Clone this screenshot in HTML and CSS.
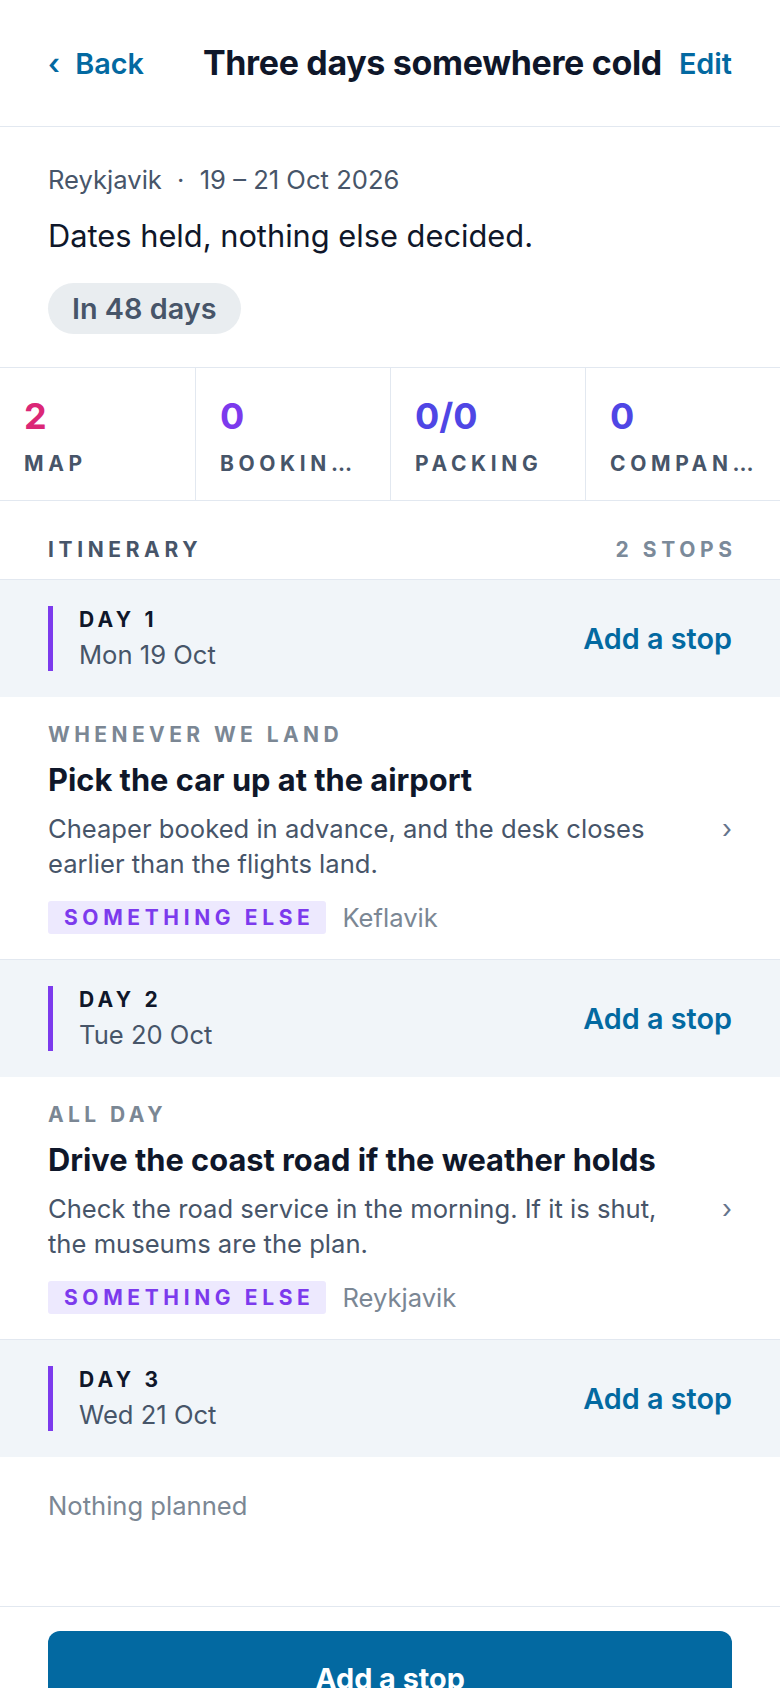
FILE: index.html
```html
<!DOCTYPE html>
<html lang="en">
  <head>
    <meta charset="utf-8" />
    <title>Three days somewhere cold</title>
    <link rel="stylesheet" href="styles.css">
  </head>
  <body>
    <header class="topbar">
      <a class="back" href="#"><span class="back-chev">&lsaquo;</span> Back</a>
      <h1 class="title">Three days somewhere cold</h1>
      <a class="edit" href="#">Edit</a>
    </header>

    <section class="summary">
      <p class="meta">Reykjavik <span class="dot">&middot;</span> 19 &ndash; 21 Oct 2026</p>
      <p class="note">Dates held, nothing else decided.</p>
      <span class="pill">In 48 days</span>
    </section>

    <nav class="stats">
      <a class="stat" href="#"><span class="num num-map">2</span><span class="label">Map</span></a>
      <a class="stat" href="#"><span class="num num-book">0</span><span class="label">Bookings</span></a>
      <a class="stat" href="#"><span class="num num-pack">0/0</span><span class="label">Packing</span></a>
      <a class="stat" href="#"><span class="num num-comp">0</span><span class="label">Companions</span></a>
    </nav>

    <div class="section-head">
      <span>Itinerary</span>
      <span class="count">2 stops</span>
    </div>

    <div class="day">
      <div class="day-info">
        <span class="day-num">Day 1</span>
        <span class="day-date">Mon 19 Oct</span>
      </div>
      <a class="add" href="#">Add a stop</a>
    </div>
    <a class="stop" href="#">
      <div class="stop-body">
        <p class="when">Whenever we land</p>
        <h2 class="stop-title">Pick the car up at the airport</h2>
        <p class="desc">Cheaper booked in advance, and the desk closes earlier than the flights land.</p>
        <div class="tags">
          <span class="tag">Something else</span>
          <span class="place">Keflavik</span>
        </div>
      </div>
      <span class="chevron">&rsaquo;</span>
    </a>

    <div class="day">
      <div class="day-info">
        <span class="day-num">Day 2</span>
        <span class="day-date">Tue 20 Oct</span>
      </div>
      <a class="add" href="#">Add a stop</a>
    </div>
    <a class="stop" href="#">
      <div class="stop-body">
        <p class="when">All day</p>
        <h2 class="stop-title">Drive the coast road if the weather holds</h2>
        <p class="desc">Check the road service in the morning. If it is shut, the museums are the plan.</p>
        <div class="tags">
          <span class="tag">Something else</span>
          <span class="place">Reykjavik</span>
        </div>
      </div>
      <span class="chevron">&rsaquo;</span>
    </a>

    <div class="day">
      <div class="day-info">
        <span class="day-num">Day 3</span>
        <span class="day-date">Wed 21 Oct</span>
      </div>
      <a class="add" href="#">Add a stop</a>
    </div>
    <div class="empty">Nothing planned</div>

    <footer class="actions">
      <button class="primary" type="button">Add a stop</button>
    </footer>
  </body>
</html>
```

FILE: styles.css
```css
body {
  margin: 0;
  background-color: #ffffff;
  color: #0f172a;
  font-family: Inter, "Noto Sans", sans-serif;
}
a {
  color: inherit;
  text-decoration: none;
}
p, h1, h2 {
  margin: 0;
}

.topbar {
  display: flex;
  align-items: center;
  gap: 17px;
  height: 126px;
  padding: 0 48px;
  border-bottom: 1px solid #e2e8f0;
}
.back {
  margin-right: auto;
  color: #0369a1;
  font-size: 28.8px;
  font-weight: 600;
}
.back-chev {
  display: inline-block;
  margin-right: 8px;
}
.title {
  font-size: 34px;
  line-height: 40px;
  font-weight: 700;
  letter-spacing: -0.01em;
  color: #0f172a;
}
.edit {
  color: #0369a1;
  font-size: 28.8px;
  font-weight: 600;
}

.summary {
  padding: 37px 48px 33px;
  border-bottom: 1px solid #e2e8f0;
}
.meta {
  font-size: 25.6px;
  line-height: 32px;
  color: #475569;
}
.dot {
  margin: 0 8px;
}
.note {
  margin-top: 22px;
  font-size: 30.8px;
  line-height: 36px;
  color: #0f172a;
}
.pill {
  display: block;
  width: fit-content;
  margin-top: 29px;
  padding: 0 24px;
  height: 51px;
  line-height: 51px;
  border-radius: 26px;
  background-color: #e9edf0;
  color: #475569;
  font-size: 28.8px;
  font-weight: 600;
}

.stats {
  display: grid;
  grid-template-columns: repeat(4, 1fr);
  border-bottom: 1px solid #e2e8f0;
}
.stat {
  display: flex;
  flex-direction: column;
  gap: 15px;
  min-width: 0;
  padding: 28px 24px 23px;
  border-left: 1px solid #e2e8f0;
}
.stat:first-child {
  border-left: 0;
}
.num {
  font-size: 36px;
  line-height: 40px;
  font-weight: 700;
}
.num-map { color: #db2777; }
.num-book { color: #7c3aed; }
.num-pack { color: #4f46e5; }
.num-comp { color: #4f46e5; }
.label {
  overflow: hidden;
  white-space: nowrap;
  text-overflow: ellipsis;
  font-size: 21px;
  line-height: 26px;
  font-weight: 700;
  letter-spacing: 0.22em;
  text-transform: uppercase;
  color: #475569;
}

.section-head {
  display: flex;
  justify-content: space-between;
  padding: 38px 48px 18px;
  border-bottom: 1px solid #e2e8f0;
  font-size: 21px;
  line-height: 22px;
  font-weight: 700;
  letter-spacing: 0.22em;
  text-transform: uppercase;
  color: #475569;
}
.count {
  margin-right: -0.22em;
  color: #7b8a9a;
}

.day {
  display: flex;
  align-items: center;
  justify-content: space-between;
  padding: 26px 48px;
  background-color: #f1f5f9;
}
.day-info {
  display: flex;
  flex-direction: column;
  gap: 5px;
  padding-left: 26px;
  border-left: 5px solid #7c3aed;
}
.day-num {
  font-size: 21px;
  line-height: 28px;
  font-weight: 700;
  letter-spacing: 0.2em;
  text-transform: uppercase;
  color: #0f172a;
}
.day-date {
  font-size: 25.6px;
  line-height: 32px;
  color: #475569;
}
.add {
  color: #0369a1;
  font-size: 28.8px;
  font-weight: 600;
}

.stop {
  display: flex;
  align-items: center;
  gap: 28px;
  padding: 25px 48px;
  border-top: 1px solid #e2e8f0;
  border-bottom: 1px solid #e2e8f0;
}
.day + .stop {
  border-top: 0;
}
.stop-body {
  flex: 1;
}
.when {
  font-size: 21px;
  line-height: 26px;
  font-weight: 700;
  letter-spacing: 0.21em;
  text-transform: uppercase;
  color: #7b8794;
}
.stop-title {
  margin-top: 13px;
  font-size: 30.8px;
  line-height: 38px;
  font-weight: 700;
  color: #0f172a;
}
.desc {
  margin-top: 12px;
  font-size: 25.6px;
  line-height: 35px;
  color: #475569;
}
.tags {
  display: flex;
  align-items: center;
  gap: 16px;
  margin-top: 20px;
}
.tag {
  padding: 0 12px 0 16px;
  height: 33px;
  line-height: 33px;
  border-radius: 3px;
  background-color: #ede9fe;
  color: #7c3aed;
  font-size: 21px;
  font-weight: 700;
  letter-spacing: 0.22em;
  text-transform: uppercase;
}
.place {
  font-size: 25.6px;
  color: #7b8794;
}
.chevron {
  font-size: 26px;
  color: #64748b;
}

.empty {
  padding: 34px 48px 85px;
  font-size: 25.6px;
  line-height: 30px;
  color: #7b8794;
}

.actions {
  padding: 24px 48px;
  border-top: 1px solid #e2e8f0;
}
.primary {
  display: block;
  width: 100%;
  padding: 34px 0;
  border: 0;
  border-radius: 12px;
  background-color: #0369a1;
  color: #ffffff;
  font-family: Inter, "Noto Sans", sans-serif;
  font-size: 28.8px;
  line-height: 28px;
  font-weight: 700;
}
```
